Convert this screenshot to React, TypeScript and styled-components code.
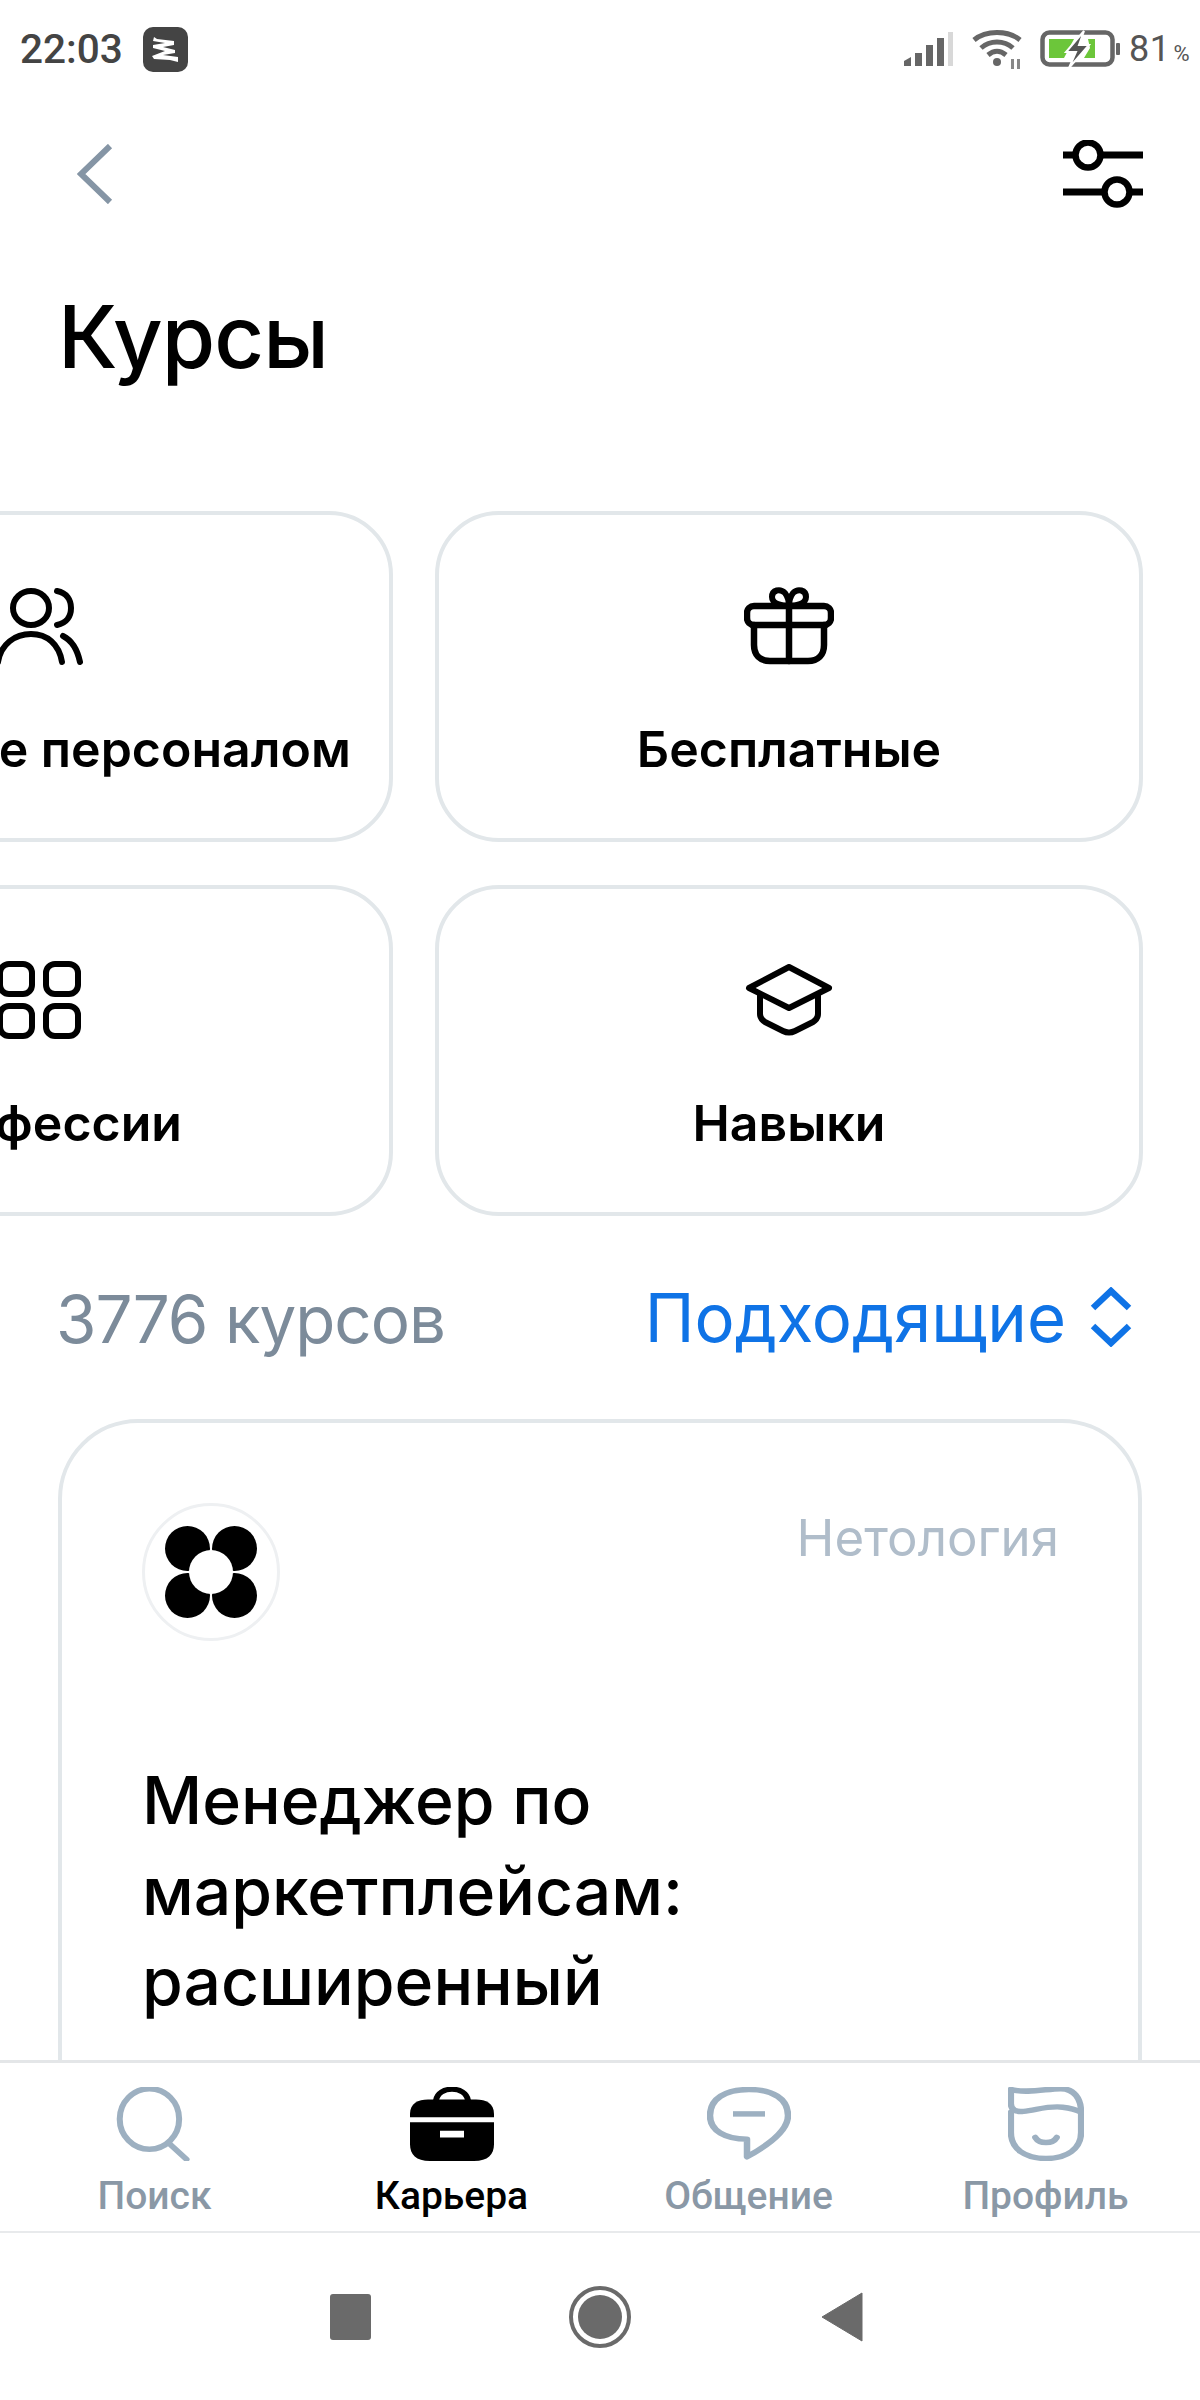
import React from "react";
import styled, { createGlobalStyle } from "styled-components";

const GlobalStyle = createGlobalStyle`
  html, body {
    margin: 0;
    padding: 0;
    background: #fff;
    font-family: Inter, "Liberation Sans", sans-serif;
  }
`;

const Screen = styled.div`
  width: 1200px;
  height: 2400px;
  display: flex;
  flex-direction: column;
  overflow: hidden;
  background: #fff;
`;

const StatusBar = styled.div`
  height: 98px;
  flex: none;
  display: flex;
  align-items: center;
  justify-content: space-between;
  padding: 0 10px 0 20px;
`;

const StatusLeft = styled.div`
  display: flex;
  align-items: center;
  gap: 20px;
`;

const Time = styled.span`
  font-family: Roboto, sans-serif;
  font-size: 40.5px;
  font-weight: 500;
  color: #444;
`;

const AppBadge = styled.div`
  width: 45px;
  height: 45px;
  border-radius: 10px;
  background: #444;
  display: flex;
  align-items: center;
  justify-content: center;
`;

const StatusRight = styled.div`
  display: flex;
  align-items: center;
`;

const WifiIcon = styled.svg`
  margin-left: 19px;
`;

const BatteryIcon = styled.svg`
  margin-left: 16px;
`;

const Percent = styled.span`
  font-family: Roboto, sans-serif;
  font-size: 36px;
  font-weight: 400;
  color: #555;
  margin-left: 9px;
  letter-spacing: 0.5px;
`;

const PercentSign = styled.span`
  font-size: 22px;
  margin-left: 3px;
`;

const Content = styled.main`
  flex: 1;
  min-height: 0;
  overflow: hidden;
`;

const TopBar = styled.div`
  height: 78px;
  margin-top: 37px;
  display: flex;
  align-items: center;
  justify-content: space-between;
  padding: 0 56px 0 77px;
`;

const PageTitle = styled.h1`
  margin: 74px 0 0 58px;
  font-size: 86.5px;
  line-height: 100px;
  font-weight: 500;
  color: #000;
  letter-spacing: -1px;
`;

const CategoryGrid = styled.div`
  display: grid;
  grid-template-columns: 708px 708px;
  grid-auto-rows: 331px;
  gap: 43px 42px;
  margin: 124px 0 0 -315px;
  width: 1458px;
`;

const CategoryCard = styled.div`
  box-sizing: border-box;
  border: 4px solid #e2e7ea;
  border-radius: 64px;
  display: flex;
  flex-direction: column;
  align-items: center;
  padding-top: 66px;
`;

const CategoryIcon = styled.div`
  height: 90px;
  display: flex;
  align-items: center;
  justify-content: center;
`;

const CategoryLabel = styled.div`
  margin-top: 50px;
  font-size: 50px;
  line-height: 56px;
  font-weight: 600;
  color: #000;
  white-space: nowrap;
`;

const ResultsRow = styled.div`
  display: flex;
  align-items: center;
  justify-content: space-between;
  margin-top: 61px;
  padding: 0 67px 0 56px;
  height: 80px;
`;

const ResultsCount = styled.span`
  font-size: 65.5px;
  font-weight: 400;
  color: #7c8b9a;
  letter-spacing: -1px;
  margin-top: 4px;
`;

const SortButton = styled.div`
  display: flex;
  align-items: center;
  gap: 23px;
  font-size: 67px;
  font-weight: 400;
  color: #0f73e6;
`;

const CourseCard = styled.article`
  box-sizing: border-box;
  margin: 62px 58px 0;
  min-height: 900px;
  border: 4px solid #e2e7ea;
  border-radius: 80px;
  padding: 80px 79px 80px 80px;
`;

const CourseHead = styled.div`
  display: flex;
  justify-content: space-between;
  align-items: flex-start;
`;

const LogoCircle = styled.div`
  width: 138px;
  height: 138px;
  box-sizing: border-box;
  border: 3px solid #eef0f2;
  border-radius: 50%;
  display: flex;
  align-items: center;
  justify-content: center;
`;

const Provider = styled.span`
  font-size: 51px;
  line-height: 70px;
  color: #b0bdca;
`;

const CourseTitle = styled.h2`
  margin: 114px 0 0;
  font-size: 66px;
  line-height: 90.5px;
  font-weight: 500;
  color: #000;
`;

const TabBar = styled.nav`
  flex: none;
  box-sizing: border-box;
  height: 173px;
  border-top: 3px solid #e4e6e8;
  border-bottom: 2px solid #e8eaec;
  display: grid;
  grid-template-columns: repeat(4, 1fr);
  padding: 0 6px;
`;

const Tab = styled.div`
  display: flex;
  flex-direction: column;
  align-items: center;
  padding-top: 24px;
`;

const TabLabel = styled.span<{ $active?: boolean }>`
  margin-top: 13px;
  font-family: Roboto, sans-serif;
  font-size: 39px;
  line-height: 44px;
  font-weight: 500;
  color: ${({ $active }) => ($active ? "#000" : "#8a98a6")};
`;

const NavBar = styled.div`
  flex: none;
  box-sizing: border-box;
  height: 167px;
  display: flex;
  align-items: center;
  justify-content: center;
  gap: 198px;
  padding-right: 7px;
`;

const NavBack = styled.svg`
  margin-left: -8px;
`;

const Line = { fill: "none", stroke: "#000", strokeWidth: 6, strokeLinecap: "round", strokeLinejoin: "round" } as const;
const TabLine = { fill: "none", stroke: "#9db0c1", strokeWidth: 6.5, strokeLinecap: "round", strokeLinejoin: "round" } as const;

const App: React.FC = () => {
  return (
    <Screen>
      <GlobalStyle />
      <StatusBar>
        <StatusLeft>
          <Time>22:03</Time>
          <AppBadge>
            <svg width="30" height="28" viewBox="0 0 30 28">
              <path d="M4 2 L7 4 L24 6 L24 10 L13 12 L25 15 L25 18 L13 20 L28 22 L28 27 L20 25 L4 24 L2 21 L15 16 L3 13 L3 10 L15 8 L3 6 Z" fill="#fff" />
            </svg>
          </AppBadge>
        </StatusLeft>
        <StatusRight>
          <svg width="50" height="36" viewBox="0 0 50 36">
            <path d="M1 35 L1 30 L8 26 L8 35 Z" fill="#666" />
            <rect x="12" y="22" width="7" height="13" fill="#666" />
            <rect x="23" y="14" width="7" height="21" fill="#666" />
            <rect x="34" y="7" width="7" height="28" fill="#666" />
            <rect x="45" y="1" width="5" height="34" fill="#d8d8d8" />
          </svg>
          <WifiIcon width="52" height="40" viewBox="0 0 52 40">
            <path d="M2 11 C14 1 36 1 48 11" fill="none" stroke="#666" strokeWidth="5" />
            <path d="M9 19 C18 11 32 11 41 19" fill="none" stroke="#666" strokeWidth="5" />
            <path d="M16 26 C22 21 28 21 34 26" fill="none" stroke="#666" strokeWidth="5" />
            <circle cx="25" cy="33" r="4" fill="#666" />
            <rect x="39" y="30" width="3" height="10" fill="#888" />
            <rect x="45" y="30" width="3" height="10" fill="#888" />
          </WifiIcon>
          <BatteryIcon width="80" height="38" viewBox="0 0 80 38">
            <rect x="2.5" y="2.5" width="70" height="32" rx="7" fill="none" stroke="#666" strokeWidth="4.5" />
            <path d="M9 9 H34 L24 28 H9 Z" fill="#6cc63a" />
            <path d="M48 9 H55 V28 H44 L50 18 Z" fill="#6cc63a" />
            <path d="M44 1 L26 22 H36 L29 38 L49 15 H39 Z" fill="#555" stroke="#fff" strokeWidth="2" />
            <rect x="76" y="13" width="4" height="12" rx="1" fill="#666" />
          </BatteryIcon>
          <Percent>
            81<PercentSign>%</PercentSign>
          </Percent>
        </StatusRight>
      </StatusBar>
      <Content>
        <TopBar>
          <svg width="36" height="60" viewBox="0 0 36 60">
            <path d="M33 2 L4 30 L33 58" fill="none" stroke="#8595a5" strokeWidth="6" />
          </svg>
          <svg width="82" height="68" viewBox="0 0 82 68">
            <path d="M1 15 H12 M40 15 H81 M1 52 H41 M70 52 H81" fill="none" stroke="#000" strokeWidth="7" />
            <circle cx="26" cy="15" r="12.5" fill="none" stroke="#000" strokeWidth="6.5" />
            <circle cx="55" cy="52" r="12.5" fill="none" stroke="#000" strokeWidth="6.5" />
          </svg>
        </TopBar>
        <PageTitle>Курсы</PageTitle>
        <CategoryGrid>
          <CategoryCard>
            <CategoryIcon>
              <svg width="88" height="80" viewBox="0 0 88 80">
                <ellipse cx="36" cy="22" rx="18" ry="17" {...Line} />
                <path d="M62 5 C72 7 76 14 76 22 C76 30 72 37 62 39" {...Line} />
                <path d="M3 76 C6 58 20 48 36 48 C52 48 64 58 67 76" {...Line} />
                <path d="M68 50 C76 54 82 62 85 76" {...Line} />
              </svg>
            </CategoryIcon>
            <CategoryLabel>Управление персоналом</CategoryLabel>
          </CategoryCard>
          <CategoryCard>
            <CategoryIcon>
              <svg width="90" height="78" viewBox="0 0 90 78">
                <rect x="3" y="19" width="84" height="19" rx="7" {...Line} strokeWidth={6.5} />
                <path d="M10 38 V58 C10 68 16 74 26 74 H64 C74 74 80 68 80 58 V38" {...Line} strokeWidth={6.5} />
                <path d="M45 19 V74" {...Line} strokeWidth={6.5} />
                <path d="M45 19 C38 19 28 17 28 10 C28 3 36 1 41 6 C44 10 45 15 45 19 C45 15 46 10 49 6 C54 1 62 3 62 10 C62 17 52 19 45 19 Z" {...Line} />
              </svg>
            </CategoryIcon>
            <CategoryLabel>Бесплатные</CategoryLabel>
          </CategoryCard>
          <CategoryCard>
            <CategoryIcon>
              <svg width="84" height="78" viewBox="0 0 84 78">
                <rect x="3" y="3" width="32" height="30" rx="9" {...Line} />
                <rect x="49" y="3" width="32" height="30" rx="9" {...Line} />
                <rect x="3" y="45" width="32" height="30" rx="9" {...Line} />
                <rect x="49" y="45" width="32" height="30" rx="9" {...Line} />
              </svg>
            </CategoryIcon>
            <CategoryLabel>Профессии</CategoryLabel>
          </CategoryCard>
          <CategoryCard>
            <CategoryIcon>
              <svg width="90" height="72" viewBox="0 0 90 72">
                <path d="M45 3 L85 24 L45 44 L5 24 Z" {...Line} />
                <path d="M16 31 V50 C16 54 18 56 21 58 L39 67 C43 69 47 69 51 67 L69 58 C72 56 74 54 74 50 V31" {...Line} />
              </svg>
            </CategoryIcon>
            <CategoryLabel>Навыки</CategoryLabel>
          </CategoryCard>
        </CategoryGrid>
        <ResultsRow>
          <ResultsCount>3776 курсов</ResultsCount>
          <SortButton>
            Подходящие
            <svg width="44" height="60" viewBox="0 0 44 60">
              <path d="M4 21 L22 4 L40 21 M4 39 L22 56 L40 39" fill="none" stroke="#0f73e6" strokeWidth="6.5" />
            </svg>
          </SortButton>
        </ResultsRow>
        <CourseCard>
          <CourseHead>
            <LogoCircle>
              <svg width="92" height="92" viewBox="0 0 92 92">
                <circle cx="22.5" cy="22.5" r="22.5" fill="#000" />
                <circle cx="69.5" cy="22.5" r="22.5" fill="#000" />
                <circle cx="22.5" cy="69.5" r="22.5" fill="#000" />
                <circle cx="69.5" cy="69.5" r="22.5" fill="#000" />
                <circle cx="46" cy="46" r="22" fill="#fff" />
              </svg>
            </LogoCircle>
            <Provider>Нетология</Provider>
          </CourseHead>
          <CourseTitle>
            Менеджер по
            <br />
            маркетплейсам:
            <br />
            расширенный
          </CourseTitle>
        </CourseCard>
      </Content>
      <TabBar>
        <Tab>
          <svg width="78" height="74" viewBox="0 0 84 88" preserveAspectRatio="none">
            <ellipse cx="36" cy="38" rx="32" ry="36" {...TabLine} />
            <path d="M58 68 L76 86" {...TabLine} />
          </svg>
          <TabLabel>Поиск</TabLabel>
        </Tab>
        <Tab>
          <svg width="84" height="74" viewBox="0 0 84 88" preserveAspectRatio="none">
            <path d="M26 16 C28 -2 56 -2 58 16" fill="none" stroke="#000" strokeWidth="6" />
            <path d="M0 32 C0 20 8 15 18 15 H66 C76 15 84 20 84 32 V36 H0 Z" fill="#000" />
            <path fillRule="evenodd" fill="#000" d="M0 42 H84 V68 C84 80 78 88 64 88 H20 C6 88 0 80 0 68 Z M30 52 V60 H54 V52 Z" />
          </svg>
          <TabLabel $active>Карьера</TabLabel>
        </Tab>
        <Tab>
          <svg width="84" height="74" viewBox="0 0 84 88" preserveAspectRatio="none">
            <path d="M42 3 C66 3 81 14 81 34 C81 52 60 70 40 83 L40 62 C18 62 3 52 3 34 C3 14 18 3 42 3 Z" {...TabLine} />
            <path d="M26 32 H58" {...TabLine} strokeLinecap="butt" />
          </svg>
          <TabLabel>Общение</TabLabel>
        </Tab>
        <Tab>
          <svg width="76" height="74" viewBox="0 0 78 88" preserveAspectRatio="none">
            <path d="M3 3 C20 8 40 2 54 2 C68 2 75 14 75 30 V54 C75 74 60 85 39 85 C18 85 3 74 3 54 V30" {...TabLine} />
            <path d="M3 3 V20 C3 27 8 30 16 29 C30 27 42 22 56 24 C64 25 70 27 75 30" {...TabLine} />
            <path d="M28 60 C32 68 46 68 50 60" {...TabLine} />
          </svg>
          <TabLabel>Профиль</TabLabel>
        </Tab>
      </TabBar>
      <NavBar>
        <svg width="41" height="46" viewBox="0 0 41 46">
          <rect width="41" height="46" rx="3" fill="#6a6a6a" />
        </svg>
        <svg width="62" height="62" viewBox="0 0 62 62">
          <circle cx="31" cy="31" r="29" fill="none" stroke="#6a6a6a" strokeWidth="4" />
          <circle cx="31" cy="31" r="22" fill="#6a6a6a" />
        </svg>
        <NavBack width="42" height="52" viewBox="0 0 42 52">
          <path d="M41 2 V50 L1 26 Z" fill="#6a6a6a" stroke="#6a6a6a" strokeWidth="1" strokeLinejoin="round" />
        </NavBack>
      </NavBar>
    </Screen>
  );
};

export default App;
